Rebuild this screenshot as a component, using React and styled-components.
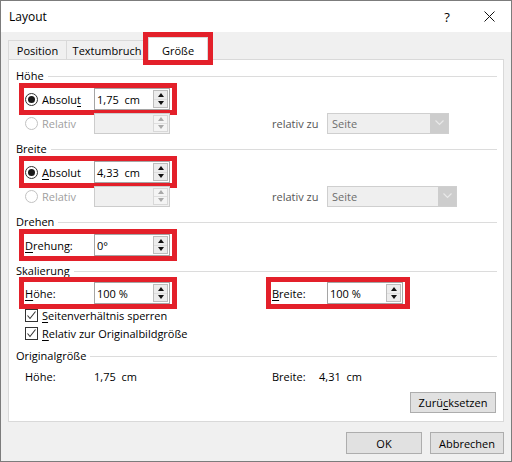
import React from "react";
import styled, { createGlobalStyle } from "styled-components";

const RED = "#e3202a";

const GlobalStyle = createGlobalStyle`
  html, body {
    margin: 0;
    padding: 0;
    background: #fff;
  }
  body {
    font-family: "Segoe UI", "Open Sans", sans-serif;
    font-size: 11px;
    color: #000;
  }
  * {
    box-sizing: border-box;
  }
  u {
    text-underline-offset: 2px;
  }
`;

const Window = styled.div`
  width: 512px;
  height: 462px;
  border: 1px solid #7c7c7c;
  background: #f0f0f0;
  display: flex;
  flex-direction: column;
`;

const TitleBar = styled.div`
  height: 31px;
  flex: none;
  background: #fff;
  display: flex;
  align-items: center;
  padding-left: 8px;
  padding-right: 1px;
  font-size: 12px;
`;

const Title = styled.span`
  flex: 1;
`;

const TitleButton = styled.span`
  width: 42px;
  height: 31px;
  display: flex;
  align-items: center;
  justify-content: center;
  font-size: 13px;
`;

const Body = styled.div`
  flex: 1;
  display: flex;
  flex-direction: column;
  padding: 5px 7px 7px;
`;

const TabStrip = styled.div`
  height: 22px;
  flex: none;
  display: flex;
  align-items: flex-end;
`;

const Tab = styled.div`
  position: relative;
  width: ${(p) => p.$w}px;
  height: ${(p) => (p.$active ? 23 : 19)}px;
  margin-left: ${(p) => (p.$overlap ? -1 : 0)}px;
  margin-bottom: ${(p) => (p.$active ? -1 : 0)}px;
  z-index: ${(p) => (p.$active ? 2 : 0)};
  background: ${(p) => (p.$active ? "#fff" : "#f0f0f0")};
  border: 1px solid #d9d9d9;
  border-bottom: none;
  display: flex;
  align-items: flex-end;
  justify-content: center;
  padding-bottom: ${(p) => (p.$active ? 2 : 1)}px;
  line-height: 14px;
  outline: ${(p) => (p.$marked ? `5px solid ${RED}` : "none")};
`;

const Panel = styled.div`
  position: relative;
  z-index: 1;
  height: 363px;
  flex: none;
  background: #fff;
  border: 1px solid #d9d9d9;
  padding: 9px 6px 0 7px;
  display: flex;
  flex-direction: column;
`;

const GroupHeading = styled.div`
  height: 14px;
  line-height: 14px;
  margin-top: ${(p) => p.$mt || 0}px;
  display: flex;
  align-items: center;
  gap: 4px;

  &::after {
    content: "";
    flex: 1;
    height: 1px;
    background: #dcdcdc;
  }
`;

const Row = styled.div`
  height: 22px;
  margin-top: ${(p) => p.$mt || 0}px;
  padding-left: 8px;
  display: flex;
  align-items: center;
`;

const FieldBox = styled.div`
  height: 22px;
  display: flex;
  align-items: center;
  padding-left: 1px;
  padding-right: 2px;
  margin-left: ${(p) => p.$ml || 0}px;
  outline: ${(p) => (p.$marked ? `5px solid ${RED}` : "none")};
`;

const Label = styled.span`
  width: ${(p) => p.$w}px;
  display: flex;
  align-items: center;
  color: ${(p) => (p.$disabled ? "#a0a0a0" : p.$dim ? "#555" : "#000")};
  white-space: pre;
`;

const Radio = styled.span`
  width: 13px;
  height: 13px;
  flex: none;
  border-radius: 50%;
  border: 1px solid ${(p) => (p.$disabled ? "#c2c2c2" : "#333")};
  background: #fff;
  margin-right: 4px;
  display: flex;
  align-items: center;
  justify-content: center;

  &::after {
    content: "";
    display: ${(p) => (p.$checked ? "block" : "none")};
    width: 7px;
    height: 7px;
    border-radius: 50%;
    background: #1a1a1a;
  }
`;

const SpinInput = styled.div`
  width: 76px;
  height: ${(p) => (p.$disabled ? 21 : 22)}px;
  border: 1px solid ${(p) => (p.$disabled ? "#cccccc" : "#a5a5a5")};
  background: ${(p) => (p.$disabled ? "#f0f0f0" : "#fff")};
  display: flex;
  align-items: center;
  padding: 1px;
`;

const Value = styled.span`
  flex: 1;
  padding-left: 1px;
  white-space: pre;
`;

const Spinner = styled.div`
  width: 15px;
  height: 100%;
  border: 1px solid ${(p) => (p.$disabled ? "#d8d8d8" : "#bdbdbd")};
  background: ${(p) => (p.$disabled ? "#f4f4f4" : "#ececec")};
  display: flex;
  flex-direction: column;
`;

const SpinHalf = styled.div`
  flex: 1;
  display: flex;
  align-items: center;
  justify-content: center;

  & + & {
    border-top: 1px solid ${(p) => (p.$disabled ? "#dedede" : "#c9c9c9")};
  }
`;

const Arrow = styled.span`
  width: 0;
  height: 0;
  border-left: 3px solid transparent;
  border-right: 3px solid transparent;
  ${(p) =>
    p.$up
      ? `border-bottom: 4px solid ${p.$disabled ? "#a8a8a8" : "#111"};`
      : `border-top: 4px solid ${p.$disabled ? "#a8a8a8" : "#111"};`}
`;

const Select = styled.div`
  width: ${(p) => p.$w}px;
  height: 21px;
  border: 1px solid #cfcfcf;
  background: #efefef;
  display: flex;
  align-items: center;
  color: #6d6d6d;
`;

const SelectText = styled.span`
  flex: 1;
  padding-left: 4px;
`;

const SelectArrow = styled.span`
  width: 18px;
  height: 100%;
  background: #cdcdcd;
  display: flex;
  align-items: center;
  justify-content: center;
`;

const CheckRow = styled.div`
  height: 16px;
  margin-top: ${(p) => p.$mt || 0}px;
  padding-left: 9px;
  display: flex;
  align-items: center;
`;

const CheckBox = styled.span`
  width: 13px;
  height: 13px;
  flex: none;
  border: 1px solid #333;
  background: #fff;
  margin-right: 4px;
  display: flex;
  align-items: center;
  justify-content: center;
`;

const InfoRow = styled.div`
  height: 16px;
  margin-top: 5px;
  padding-left: 9px;
  display: flex;
  align-items: center;
`;

const InfoCell = styled.span`
  width: ${(p) => (p.$w ? `${p.$w}px` : "auto")};
  white-space: pre;
`;

const Button = styled.div`
  width: ${(p) => p.$w}px;
  height: ${(p) => p.$h || 22}px;
  background: #e1e1e1;
  border: 1px solid #adadad;
  display: flex;
  align-items: center;
  justify-content: center;
  font-size: 11px;
`;

const ResetButton = styled(Button)`
  align-self: flex-end;
  margin-top: 8px;
  margin-right: 1px;
`;

const Footer = styled.div`
  margin-top: 10px;
  display: flex;
  justify-content: flex-end;
  gap: 8px;
`;

const Spin = ({ value, disabled }) => (
  <SpinInput $disabled={disabled}>
    <Value>{value}</Value>
    <Spinner $disabled={disabled}>
      <SpinHalf $disabled={disabled}>
        <Arrow $up $disabled={disabled} />
      </SpinHalf>
      <SpinHalf $disabled={disabled}>
        <Arrow $disabled={disabled} />
      </SpinHalf>
    </Spinner>
  </SpinInput>
);

const Dropdown = ({ w }) => (
  <Select $w={w}>
    <SelectText>Seite</SelectText>
    <SelectArrow>
      <svg width="9" height="6" viewBox="0 0 9 6">
        <polyline points="0.5,0.5 4.5,4.5 8.5,0.5" fill="none" stroke="#e9e9e9" strokeWidth="1.2" />
      </svg>
    </SelectArrow>
  </Select>
);

const Check = () => (
  <CheckBox>
    <svg width="11" height="11" viewBox="0 0 11 11">
      <polyline points="1.5,5.5 4,8.5 9.5,1.5" fill="none" stroke="#333" strokeWidth="1.1" />
    </svg>
  </CheckBox>
);

const RelativeRow = ({ mt, selectWidth }) => (
  <Row $mt={mt}>
    <FieldBox>
      <Label $w={69} $disabled>
        <Radio $disabled />
        Relativ
      </Label>
      <Spin disabled value="" />
    </FieldBox>
    <FieldBox $ml={99}>
      <Label $w={55} $dim>
        relativ zu
      </Label>
      <Dropdown w={selectWidth} />
    </FieldBox>
  </Row>
);

export default function App() {
  return (
    <>
      <GlobalStyle />
      <Window>
        <TitleBar>
          <Title>Layout</Title>
          <TitleButton>?</TitleButton>
          <TitleButton>
            <svg width="11" height="11" viewBox="0 0 11 11">
              <path d="M0.5 0.5 L10.5 10.5 M10.5 0.5 L0.5 10.5" stroke="#111" strokeWidth="1" />
            </svg>
          </TitleButton>
        </TitleBar>
        <Body>
          <TabStrip>
            <Tab $w={59}>Position</Tab>
            <Tab $w={82} $overlap>
              Textumbruch
            </Tab>
            <Tab $w={60} $active $marked>
              Größe
            </Tab>
          </TabStrip>
          <Panel>
            <GroupHeading>Höhe</GroupHeading>
            <Row $mt={5}>
              <FieldBox $marked>
                <Label $w={69}>
                  <Radio $checked />
                  <span>
                    Absolu<u>t</u>
                  </span>
                </Label>
                <Spin value="1,75  cm" />
              </FieldBox>
            </Row>
            <RelativeRow mt={2} selectWidth={122} />

            <GroupHeading $mt={8}>Breite</GroupHeading>
            <Row $mt={5}>
              <FieldBox $marked>
                <Label $w={69}>
                  <Radio $checked />
                  <span>
                    <u>A</u>bsolut
                  </span>
                </Label>
                <Spin value="4,33  cm" />
              </FieldBox>
            </Row>
            <RelativeRow mt={2} selectWidth={130} />

            <GroupHeading $mt={8}>Drehen</GroupHeading>
            <Row $mt={5}>
              <FieldBox $marked>
                <Label $w={69}>
                  <span>
                    <u>D</u>rehung:
                  </span>
                </Label>
                <Spin value="0°" />
              </FieldBox>
            </Row>

            <GroupHeading $mt={8}>Skalierung</GroupHeading>
            <Row $mt={4}>
              <FieldBox $marked>
                <Label $w={69}>
                  <span>
                    <u>H</u>öhe:
                  </span>
                </Label>
                <Spin value="100 %" />
              </FieldBox>
              <FieldBox $marked $ml={99}>
                <Label $w={55}>
                  <span>
                    <u>B</u>reite:
                  </span>
                </Label>
                <Spin value="100 %" />
              </FieldBox>
            </Row>
            <CheckRow $mt={3}>
              <Check />
              <span>
                <u>S</u>eitenverhältnis sperren
              </span>
            </CheckRow>
            <CheckRow $mt={2}>
              <Check />
              <span>
                <u>R</u>elativ zur Originalbildgröße
              </span>
            </CheckRow>

            <GroupHeading $mt={8}>Originalgröße</GroupHeading>
            <InfoRow>
              <InfoCell $w={69}>Höhe:</InfoCell>
              <InfoCell $w={178}>1,75  cm</InfoCell>
              <InfoCell $w={47}>Breite:</InfoCell>
              <InfoCell>4,31  cm</InfoCell>
            </InfoRow>
            <ResetButton $w={86} $h={21}>
              <span>
                Zurü<u>c</u>ksetzen
              </span>
            </ResetButton>
          </Panel>
          <Footer>
            <Button $w={76}>OK</Button>
            <Button $w={74}>Abbrechen</Button>
          </Footer>
        </Body>
      </Window>
    </>
  );
}
